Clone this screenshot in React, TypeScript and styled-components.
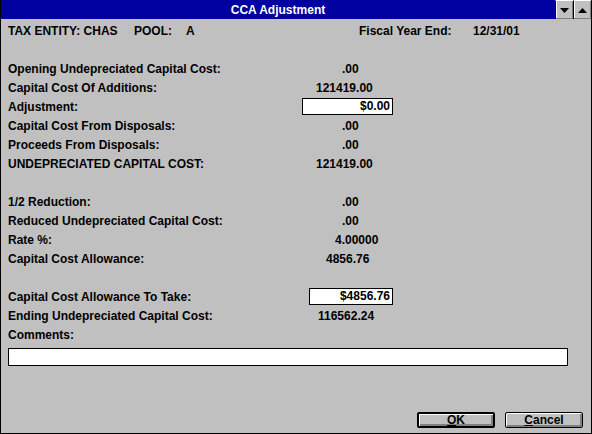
import styled, { createGlobalStyle } from "styled-components";

const GlobalStyle = createGlobalStyle`
  html, body {
    margin: 0;
    padding: 0;
    background: #c0c0c0;
  }
  body {
    font-family: "Liberation Sans", Arial, sans-serif;
    font-weight: bold;
    font-size: 12px;
    color: #000;
  }
`;

const Window = styled.div`
  box-sizing: border-box;
  width: 592px;
  height: 434px;
  background: #c0c0c0;
  border: 1px solid #000;
  border-top: none;
  display: flex;
  flex-direction: column;
`;

const TitleBar = styled.div`
  height: 19px;
  background: #0000a0;
  display: flex;
  align-items: center;
`;

const Title = styled.div`
  flex: 1;
  text-align: center;
  color: #fff;
  font-size: 12px;
`;

const TitleButton = styled.div`
  box-sizing: border-box;
  width: 18px;
  height: 19px;
  background: #c0c0c0;
  border-left: 1px solid #000;
  border-top: 1px solid #fff;
  box-shadow: inset -1px -1px 0 #808080, inset 1px 0 0 #fff;
  display: flex;
  align-items: center;
  justify-content: center;
`;

const Body = styled.div`
  padding: 2px 8px 0 7px;
  display: flex;
  flex-direction: column;
  flex: 1;
`;

const Row = styled.div<{ $gap?: boolean }>`
  height: 19px;
  display: flex;
  align-items: center;
  margin-top: ${(p) => (p.$gap ? "19px" : "0")};
  white-space: nowrap;
`;

const Label = styled.span`
  width: 294px;
  flex: none;
`;

const Value = styled.span<{ $indent: number }>`
  padding-left: ${(p) => p.$indent}px;
`;

const Field = styled.div<{ $indent: number }>`
  box-sizing: border-box;
  margin-left: ${(p) => p.$indent}px;
  width: ${(p) => 91 - p.$indent}px;
  height: 17px;
  background: #fff;
  border: 1px solid #000;
  text-align: right;
  padding: 0 2px;
  line-height: 15px;
`;

const HeaderPart = styled.span<{ $width: number }>`
  width: ${(p) => p.$width}px;
  flex: none;
`;

const CommentBox = styled.div`
  box-sizing: border-box;
  margin-top: 4px;
  width: 560px;
  height: 18px;
  background: #fff;
  border: 1px solid #000;
`;

const Footer = styled.div`
  margin-top: auto;
  display: flex;
  justify-content: flex-end;
  gap: 10px;
  padding: 0 0 5px;
`;

const Button = styled.button<{ $default?: boolean }>`
  box-sizing: border-box;
  width: 78px;
  height: 16px;
  padding: 0;
  font: inherit;
  color: #000;
  background: #c0c0c0;
  border: ${(p) => (p.$default ? "2px" : "1px")} solid #000;
  border-radius: 2px;
  box-shadow: inset 1px 1px 0 #fff, inset -2px -2px 0 #808080;
  line-height: 12px;
  u {
    text-decoration: underline;
  }
`;

const Arrow = ({ up }: { up?: boolean }) => (
  <svg width="9" height="5" viewBox="0 0 9 5">
    <polygon points={up ? "4.5,0 9,5 0,5" : "0,0 9,0 4.5,5"} fill="#000" />
  </svg>
);

const lines1: [string, string, number, boolean?][] = [
  ["Opening Undepreciated Capital Cost:", ".00", 40],
  ["Capital Cost Of Additions:", "121419.00", 14],
  ["Adjustment:", "$0.00", 0, true],
  ["Capital Cost From Disposals:", ".00", 40],
  ["Proceeds From Disposals:", ".00", 40],
  ["UNDEPRECIATED CAPITAL COST:", "121419.00", 14],
];

const lines2: [string, string, number][] = [
  ["1/2 Reduction:", ".00", 40],
  ["Reduced Undepreciated Capital Cost:", ".00", 40],
  ["Rate %:", "4.00000", 33],
  ["Capital Cost Allowance:", "4856.76", 24],
];

export default function App() {
  return (
    <>
      <GlobalStyle />
      <Window>
        <TitleBar>
          <Title>CCA Adjustment</Title>
          <TitleButton>
            <Arrow />
          </TitleButton>
          <TitleButton>
            <Arrow up />
          </TitleButton>
        </TitleBar>
        <Body>
          <Row>
            <HeaderPart $width={126}>TAX ENTITY: CHAS</HeaderPart>
            <HeaderPart $width={52}>POOL:</HeaderPart>
            <HeaderPart $width={173}>A</HeaderPart>
            <HeaderPart $width={114}>Fiscal Year End:</HeaderPart>
            <HeaderPart $width={60}>12/31/01</HeaderPart>
          </Row>
          {lines1.map(([label, value, indent, field], i) => (
            <Row key={label} $gap={i === 0}>
              <Label>{label}</Label>
              {field ? <Field $indent={indent}>{value}</Field> : <Value $indent={indent}>{value}</Value>}
            </Row>
          ))}
          {lines2.map(([label, value, indent], i) => (
            <Row key={label} $gap={i === 0}>
              <Label>{label}</Label>
              <Value $indent={indent}>{value}</Value>
            </Row>
          ))}
          <Row $gap>
            <Label>Capital Cost Allowance To Take:</Label>
            <Field $indent={7}>$4856.76</Field>
          </Row>
          <Row>
            <Label>Ending Undepreciated Capital Cost:</Label>
            <Value $indent={16}>116562.24</Value>
          </Row>
          <Row>
            <Label>Comments:</Label>
          </Row>
          <CommentBox />
          <Footer>
            <Button $default>
              <u>O</u>K
            </Button>
            <Button>
              <u>C</u>ancel
            </Button>
          </Footer>
        </Body>
      </Window>
    </>
  );
}
